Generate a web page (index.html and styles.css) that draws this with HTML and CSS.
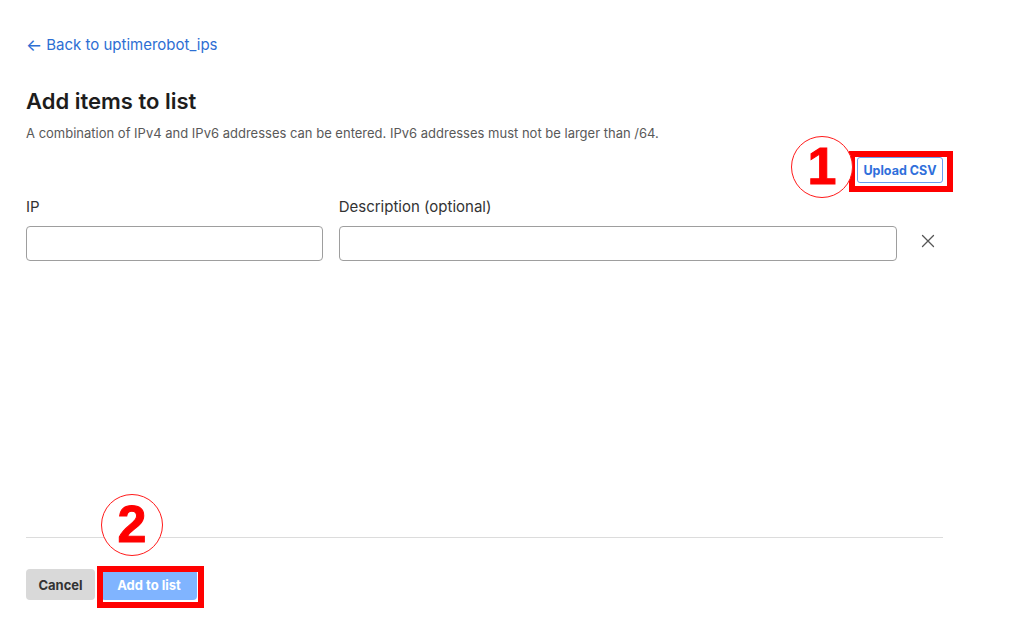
FILE: index.html
```html
<!DOCTYPE html>
<html lang="en">
<head>
<meta charset="utf-8">
<title>Add items to list</title>
<link rel="stylesheet" href="styles.css">
</head>
<body>
<div class="page">
  <div class="content">
    <a class="back" href="#"><span class="arrow">&larr;</span> Back to uptimerobot_ips</a>
    <h1 class="title">Add items to list</h1>
    <p class="desc">A combination of IPv4 and IPv6 addresses can be entered. IPv6 addresses must not be larger than /64.</p>
    <div class="upload-row">
      <div class="annot-wrap">
        <span class="step step-1">1</span>
        <span class="frame frame-1"></span>
        <button class="btn-upload" type="button">Upload CSV</button>
      </div>
    </div>
    <div class="fields">
      <div class="field field-ip">
        <label class="label">IP</label>
        <input class="input" type="text">
      </div>
      <div class="field field-desc">
        <label class="label">Description (optional)</label>
        <input class="input" type="text">
      </div>
      <button class="remove" type="button" aria-label="Remove">
        <svg width="14" height="14" viewBox="0 0 14 14"><path d="M1.5 1.5 L12.5 12.5 M12.5 1.5 L1.5 12.5" stroke="#555" stroke-width="1.3" fill="none" stroke-linecap="round"/></svg>
      </button>
    </div>
  </div>
  <div class="footer">
    <button class="btn-cancel" type="button">Cancel</button>
    <div class="annot-wrap">
      <span class="step step-2">2</span>
      <span class="frame frame-2"></span>
      <button class="btn-add" type="button">Add to list</button>
    </div>
  </div>
</div>
</body>
</html>
```

FILE: styles.css
```css
* { box-sizing: border-box; }
html, body { margin: 0; padding: 0; background: #fff; }
body {
  font-family: Inter, "Noto Sans", "Liberation Sans", sans-serif;
  color: #222;
}
.page {
  width: 943px;
  height: 617px;
  padding-left: 26px;
  display: flex;
  flex-direction: column;
}
.content {
  flex: 1;
  padding-top: 35px;
}
.back {
  display: flex;
  align-items: center;
  gap: 4px;
  font-size: 15px;
  line-height: 20px;
  color: #2d6ed3;
  text-decoration: none;
}
.arrow { font-size: 17px; line-height: 20px; }
.title {
  margin: 32px 0 0;
  font-size: 22px;
  line-height: 28px;
  font-weight: 600;
  color: #1d1d1d;
}
.desc {
  margin: 9px 0 0;
  font-size: 13px;
  line-height: 18px;
  color: #595959;
}
.upload-row {
  margin-top: 15px;
  display: flex;
  justify-content: flex-end;
}
.annot-wrap { position: relative; display: flex; }
.btn-upload {
  width: 86px;
  height: 26px;
  padding: 0;
  border: 1px solid #6a9ef0;
  border-radius: 3px;
  background: #fff;
  color: #2f6fdb;
  font-family: inherit;
  font-size: 12.5px;
  font-weight: 700;
  position: relative;
  z-index: 1;
}
.frame {
  position: absolute;
  border: 6px solid #ff0000;
  z-index: 2;
  pointer-events: none;
}
.frame-1 { left: -8px; top: -6px; right: -10px; bottom: -9px; }
.frame-2 { left: -4px; top: -3px; right: -7px; bottom: -8px; }
.step {
  position: absolute;
  width: 62px;
  height: 62px;
  border: 1.5px solid #ff1a1a;
  border-radius: 50%;
  background: #fff;
  color: #ff0000;
  font-family: "Liberation Sans", Arial, sans-serif;
  font-weight: 700;
  font-size: 52px;
  line-height: 58px;
  text-align: center;
  z-index: 3;
  -webkit-text-stroke: 1px #ff0000;
}
.step-1 { left: -66px; top: -21px; }
.step-2 { left: 0px; top: -75px; }
.fields {
  margin-top: 14px;
  display: flex;
  align-items: flex-end;
  gap: 16px;
}
.field { display: flex; flex-direction: column; }
.field-ip { width: 297px; }
.field-desc { width: 559px; }
.label {
  font-size: 15px;
  line-height: 20px;
  color: #333;
  margin-bottom: 9px;
}
.input {
  height: 35px;
  border: 1px solid #9e9e9e;
  border-radius: 4px;
  background: #fff;
  font-family: inherit;
  font-size: 14px;
  padding: 0 10px;
}
.remove {
  width: 30px;
  height: 35px;
  margin-bottom: 3px;
  padding: 0;
  border: none;
  background: transparent;
  display: flex;
  align-items: center;
  justify-content: center;
}
.footer {
  border-top: 1px solid #dcdcdc;
  padding: 31px 0 17px;
  display: flex;
  gap: 6px;
}
.btn-cancel, .btn-add {
  height: 31px;
  padding: 0;
  border: none;
  border-radius: 4px;
  font-family: inherit;
  font-size: 13px;
  font-weight: 700;
}
.btn-cancel {
  width: 69px;
  background: #d9d9d9;
  color: #333;
}
.btn-add {
  width: 96px;
  background: #80b4ff;
  color: #fff;
  position: relative;
  z-index: 1;
}
```
